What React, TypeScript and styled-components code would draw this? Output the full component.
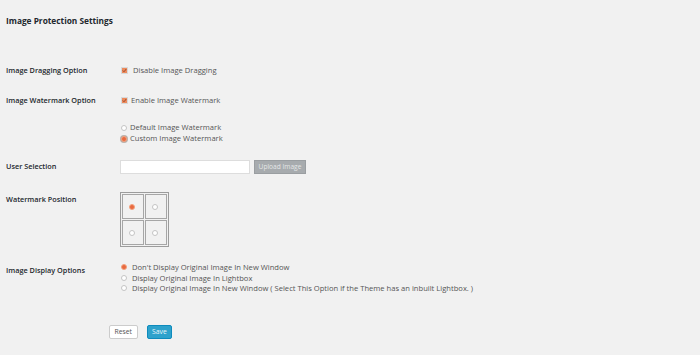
import React from 'react'
import styled, { createGlobalStyle } from 'styled-components'

const GlobalStyle = createGlobalStyle`
  html, body {
    margin: 0;
    padding: 0;
    background: #f1f1f1;
    font-family: "Open Sans", "Liberation Sans", sans-serif;
    color: #444;
  }
`

const Page = styled.div`
  width: 700px;
  height: 355px;
  box-sizing: border-box;
  padding: 0 6px;
  overflow: hidden;
`

const Title = styled.h2`
  margin: 16px 0 0;
  font-size: 8.3px;
  line-height: 10px;
  font-weight: 700;
  color: #23282d;
`

const Row = styled.div<{ $top: number }>`
  display: flex;
  align-items: flex-start;
  margin-top: ${({ $top }) => $top}px;
`

const Label = styled.div<{ $pad?: number }>`
  width: 114px;
  flex-shrink: 0;
  font-size: 7.3px;
  line-height: 10px;
  font-weight: 600;
  color: #23282d;
  padding-top: ${({ $pad }) => $pad || 0}px;
`

const Field = styled.div`
  display: flex;
  flex-direction: column;
`

const Option = styled.label<{ $lh?: number; $gap?: number }>`
  display: flex;
  align-items: center;
  gap: ${({ $gap }) => $gap ?? 3}px;
  font-size: 7.6px;
  line-height: ${({ $lh }) => $lh || 10}px;
  color: #555;
  padding-left: 1px;
  white-space: nowrap;
`

const Check = styled.span`
  width: 7px;
  height: 7px;
  box-sizing: border-box;
  background: #ec8b5e;
  border: 1px solid #d9d9d9;
  display: inline-flex;
  align-items: center;
  justify-content: center;
`

const Radio = styled.span<{ $on?: boolean; $focus?: boolean }>`
  width: 6px;
  height: 6px;
  border-radius: 50%;
  box-sizing: border-box;
  background: ${({ $on }) => ($on ? '#e8693f' : '#fff')};
  border: 1px solid ${({ $on }) => ($on ? '#f3a27f' : '#c4c4c4')};
  box-shadow: ${({ $focus }) => ($focus ? '0 0 0 1px #b9b0aa' : 'none')};
  flex-shrink: 0;
`

const Input = styled.div`
  width: 130px;
  height: 14px;
  box-sizing: border-box;
  background: #fff;
  border: 1px solid #ddd;
`

const UploadButton = styled.button`
  all: unset;
  margin-left: 4px;
  width: 52px;
  height: 14px;
  box-sizing: border-box;
  background: #a7abae;
  border: 1px solid #9a9ea1;
  color: #e4e6e7;
  font-size: 6.6px;
  text-align: center;
  line-height: 12px;
  font-family: "Open Sans", sans-serif;
`

const Positions = styled.div`
  display: grid;
  grid-template-columns: 22px 22px;
  grid-template-rows: 25px 25px;
  gap: 1px;
  padding: 1px;
  border: 1px solid #9c9c9c;
  width: max-content;
`

const Cell = styled.div`
  border: 1px solid #a6a6a6;
  display: flex;
  align-items: center;
  padding-left: 6px;
`

const Buttons = styled.div`
  display: flex;
  gap: 9px;
  margin-top: 31px;
  padding-left: 103px;
`

const Button = styled.button<{ $primary?: boolean }>`
  all: unset;
  height: 14px;
  box-sizing: border-box;
  padding: 0 4.5px;
  font-size: 6.8px;
  line-height: 12px;
  font-family: "Open Sans", sans-serif;
  border-radius: 2px;
  background: ${({ $primary }) => ($primary ? '#2ea2cc' : '#fff')};
  border: 1px solid ${({ $primary }) => ($primary ? '#0e8bbd' : '#ccc')};
  color: ${({ $primary }) => ($primary ? '#eaf6fb' : '#555')};
`

const CheckMark = () => (
  <svg width="5" height="5" viewBox="0 0 10 10">
    <path d="M1.5 5 L4 7.5 L8.5 2" fill="none" stroke="#9b4a2a" strokeWidth="2" />
  </svg>
)

export default function App() {
  return (
    <>
      <GlobalStyle />
      <Page>
        <Title>Image Protection Settings</Title>

        <Row $top={39}>
          <Label>Image Dragging Option</Label>
          <Option $gap={5}>
            <Check><CheckMark /></Check>
            Disable Image Dragging
          </Option>
        </Row>

        <Row $top={20}>
          <Label>Image Watermark Option</Label>
          <Option>
            <Check><CheckMark /></Check>
            Enable Image Watermark
          </Option>
        </Row>

        <Row $top={17}>
          <Label />
          <Field>
            <Option $lh={11}>
              <Radio />
              Default Image Watermark
            </Option>
            <Option $lh={11}>
              <Radio $on $focus />
              Custom Image Watermark
            </Option>
          </Field>
        </Row>

        <Row $top={16}>
          <Label $pad={1}>User Selection</Label>
          <Input />
          <UploadButton>Upload Image</UploadButton>
        </Row>

        <Row $top={18}>
          <Label $pad={2}>Watermark Position</Label>
          <Positions>
            <Cell><Radio $on /></Cell>
            <Cell><Radio /></Cell>
            <Cell><Radio /></Cell>
            <Cell><Radio /></Cell>
          </Positions>
        </Row>

        <Row $top={15}>
          <Label $pad={3}>Image Display Options</Label>
          <Field>
            <Option $lh={10.5} $gap={5}>
              <Radio $on />
              Don't Display Original Image In New Window
            </Option>
            <Option $lh={10.5} $gap={5}>
              <Radio />
              Display Original Image In Lightbox
            </Option>
            <Option $lh={10.5} $gap={5}>
              <Radio />
              Display Original Image In New Window ( Select This Option if the Theme has an inbuilt Lightbox. )
            </Option>
          </Field>
        </Row>

        <Buttons>
          <Button>Reset</Button>
          <Button $primary>Save</Button>
        </Buttons>
      </Page>
    </>
  )
}
